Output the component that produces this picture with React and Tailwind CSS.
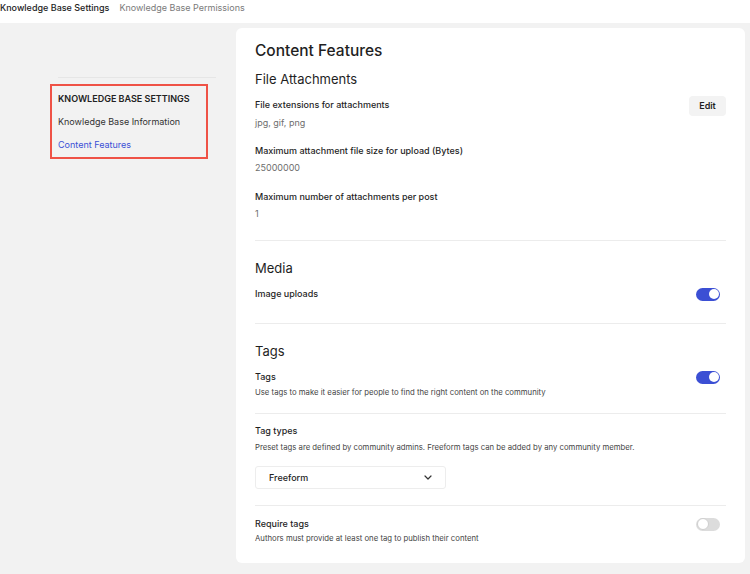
const font = { fontFamily: 'Inter, "Liberation Sans", sans-serif' }

function Toggle({ on }) {
  return on ? (
    <div className="w-[24px] h-[13px] rounded-full bg-[#3b4fd4] flex items-center justify-end pr-[1.5px]">
      <div className="w-[10px] h-[10px] rounded-full bg-white" />
    </div>
  ) : (
    <div className="w-[24px] h-[13px] rounded-full bg-[#dcdcdc] flex items-center justify-start pl-[0.5px]">
      <div className="w-[12px] h-[12px] rounded-full bg-white border border-[#cfcfcf]" />
    </div>
  )
}

function Divider() {
  return <div className="h-px bg-[#ececec]" />
}

export default function App() {
  return (
    <div className="w-[750px] h-[574px] bg-[#f2f2f2] flex flex-col overflow-hidden text-[#1f1f1f]" style={font}>
      <div className="h-[23px] bg-white flex items-start gap-[10px] pt-[1px] text-[9px] leading-[14px]">
        <span className="font-medium text-[#1d1d1d]">Knowledge Base Settings</span>
        <span className="text-[#7a7a7a]">Knowledge Base Permissions</span>
      </div>
      <div className="flex-1 flex">
        <aside className="w-[236px] shrink-0 pt-[54px]">
          <div className="ml-[58px] w-[158px] h-px bg-[#e6e6e6]" />
          <div className="ml-[50px] mt-[6px] w-[158px] h-[75px] border-2 border-[#ef5246] px-[6px] pt-[6px]">
            <div className="text-[9px] leading-[14px] font-semibold whitespace-nowrap text-[#222]">
              KNOWLEDGE BASE SETTINGS
            </div>
            <div className="mt-[9px] text-[9px] leading-[14px] text-[#333]">Knowledge Base Information</div>
            <div className="mt-[9px] text-[9px] leading-[14px] text-[#3a4fd6]">Content Features</div>
          </div>
        </aside>
        <main className="w-[509px] mt-[5px] mb-[11px] bg-white rounded-[6px] px-[19px] pt-[12px] pb-[18px]">
          <h1 className="text-[15.5px] leading-[22px] font-medium">Content Features</h1>
          <h2 className="mt-[8px] text-[13px] leading-[18px]">File Attachments</h2>

          <div className="flex justify-between items-start">
            <div>
              <div className="mt-[10px] text-[9px] leading-[14px] font-medium">File extensions for attachments</div>
              <div className="mt-[4px] text-[9px] leading-[14px] text-[#6e6e6e]">jpg, gif, png</div>
            </div>
            <button className="mt-[8px] w-[37px] h-[20px] rounded-[4px] bg-[#f3f3f3] text-[9px] font-semibold">Edit</button>
          </div>
          <div className="mt-[14px] text-[9px] leading-[14px] font-medium">Maximum attachment file size for upload (Bytes)</div>
          <div className="mt-[3px] text-[9px] leading-[14px] text-[#6e6e6e]">25000000</div>
          <div className="mt-[15px] text-[9px] leading-[14px] font-medium">Maximum number of attachments per post</div>
          <div className="mt-[3px] text-[9px] leading-[14px] text-[#6e6e6e]">1</div>

          <div className="mt-[19px]"><Divider /></div>

          <h2 className="mt-[18px] text-[13px] leading-[18px]">Media</h2>
          <div className="mt-[10px] flex justify-between items-center pr-[6px]">
            <span className="text-[9px] leading-[14px] font-medium">Image uploads</span>
            <Toggle on />
          </div>

          <div className="mt-[22px]"><Divider /></div>

          <h2 className="mt-[18px] text-[13px] leading-[18px]">Tags</h2>
          <div className="mt-[10px] flex justify-between items-center pr-[6px]">
            <span className="text-[9px] leading-[14px] font-medium">Tags</span>
            <Toggle on />
          </div>
          <div className="mt-[2px] text-[7.75px] leading-[12px] text-[#444]">
            Use tags to make it easier for people to find the right content on the community
          </div>

          <div className="mt-[15px]"><Divider /></div>

          <div className="mt-[10px] text-[9px] leading-[14px] font-medium">Tag types</div>
          <div className="mt-[3px] text-[7.75px] leading-[12px] text-[#444]">
            Preset tags are defined by community admins. Freeform tags can be added by any community member.
          </div>
          <div className="mt-[13px] w-[191px] h-[23px] rounded-[3px] border border-[#ededed] flex items-center justify-between pl-[13px] pr-[13px]">
            <span className="text-[9px] font-medium">Freeform</span>
            <svg width="8" height="5" viewBox="0 0 8 5" fill="none">
              <path d="M1 1l3 3 3-3" stroke="#333" strokeWidth="1.2" strokeLinecap="round" strokeLinejoin="round" />
            </svg>
          </div>

          <div className="mt-[16px]"><Divider /></div>

          <div className="mt-[11px] flex justify-between items-center pr-[6px]">
            <span className="text-[9px] leading-[14px] font-medium">Require tags</span>
            <Toggle />
          </div>
          <div className="mt-[1px] text-[7.75px] leading-[12px] text-[#444]">
            Authors must provide at least one tag to publish their content
          </div>
        </main>
      </div>
    </div>
  )
}
